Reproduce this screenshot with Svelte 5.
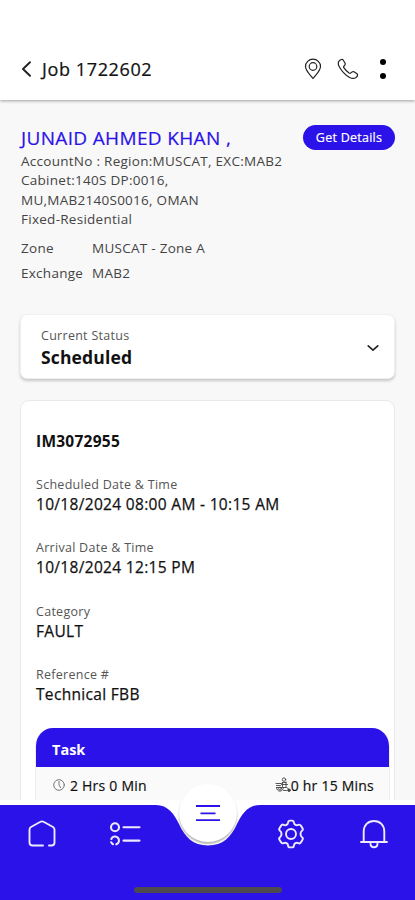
<script>
  const fields = [
    { label: 'Scheduled Date & Time', value: '10/18/2024 08:00 AM - 10:15 AM' },
    { label: 'Arrival Date & Time', value: '10/18/2024 12:15 PM' },
    { label: 'Category', value: 'FAULT' },
    { label: 'Reference #', value: 'Technical FBB' }
  ];
</script>

<div class="screen">
  <header>
    <svg class="back" width="12" height="18" viewBox="0 0 12 18"><path d="M10 2.200 3 9 10 15.800" /></svg>
    <h1>Job 1722602</h1>
    <svg class="pin" width="18" height="22" viewBox="0 0 18 22">
      <path d="M9 20.5C6.500 17 1.500 12.700 1.500 8.400a7.500 7.200 0 0 1 15 0C16.500 12.700 11.500 17 9 20.500Z" />
      <circle cx="9" cy="8.500" r="3.800" />
    </svg>
    <svg class="phone" width="22" height="22" viewBox="0 0 22 22">
      <path d="M2.200 2.900C3.500 1.300 5.400 1 6.200 2l1.900 3.200c.6 1.200-.1 2-1.200 3-.5.500-.4 1 .1 1.700 1.300 2 2.900 3.700 5.100 5.100.7.400 1.200.4 1.700-.1 1-1.100 2-1.800 3.200-1.100l3 2c1 .9.600 2.400-.9 3.600-1.800 1.500-4.100 1.400-6.900-.2C8 16.700 4.700 13.100 2.400 9 1 6.500.9 4.400 2.200 2.900Z" />
    </svg>
    <div class="dots"><i></i><i></i></div>
  </header>

  <main>
    <section class="customer">
      <div class="who">
        <h2>JUNAID AHMED KHAN ,</h2>
        <p>AccountNo : Region:MUSCAT, EXC:MAB2<br />Cabinet:140S DP:0016,<br />MU,MAB2140S0016, OMAN<br />Fixed-Residential</p>
      </div>
      <button>Get Details</button>
    </section>
    <dl>
      <dt>Zone</dt><dd>MUSCAT - Zone A</dd>
      <dt>Exchange</dt><dd>MAB2</dd>
    </dl>

    <section class="status">
      <div>
        <span class="label">Current Status</span>
        <strong>Scheduled</strong>
      </div>
      <svg width="12" height="8" viewBox="0 0 12 8"><path d="M1.200 1.800 6 6.200 10.800 1.800" /></svg>
    </section>

    <section class="job">
      <h3>IM3072955</h3>
      {#each fields as f}
        <div class="field">
          <span class="label">{f.label}</span>
          <span class="value">{f.value}</span>
        </div>
      {/each}
      <div class="task">
        <div class="task-head">Task</div>
        <div class="task-row">
          <svg class="clock" width="12" height="12" viewBox="0 0 12 12"><circle cx="6" cy="6" r="5.300" /><path d="M6 2.500V6l1.700 2.700" /></svg>
          <span class="dur">2 Hrs 0 Min</span>
          <svg class="travel" width="17" height="16" viewBox="0 0 17 16">
            <circle cx="9" cy="2.600" r="1.700" />
            <path d="M1 6.500h5.500M1.500 8.500h4M7.500 5.500v4M11 5v5M7.500 5.500h3.500M6.500 7.500h6M1.500 10.500h10c1 0 1.500 1 2 2" />
            <path d="M1.500 10.500C1.800 15.500 8 15.500 8.500 10.500" /><circle cx="5" cy="11.600" r="1.400" />
            <path d="M8.500 13.500h3" /><circle cx="14" cy="13.200" r="1.300" fill="#444" />
          </svg>
          <span class="eta">0 hr 15 Mins</span>
        </div>
      </div>
    </section>
  </main>

  <nav>
    <svg class="bar" width="415" height="95" viewBox="0 0 415 95">
      <path d="M0 0H156C168 0 174 9 179 19C185 32 193 40.500 208 40.500C223 40.500 231 32 237 19C242 9 248 0 260 0H415V95H0Z" />
    </svg>
    <div class="tabs">
      <svg class="home" width="30" height="30" viewBox="0 0 30 30"><path d="M16 26.500H5.500Q2.500 26.500 2.500 23.500V10.500Q2.500 9 4 8L13 3Q15 1.800 17 3L26 8Q27.500 9 27.500 10.500V23.500Q27.500 26.500 24.500 26.500H22" /></svg>
      <svg class="list" width="32" height="26" viewBox="0 0 32 26"><circle cx="6" cy="6.200" r="4" /><path d="M14.500 6.200H30.500M14.500 19.600H30.500M2.300 18A4 4 0 1 1 7.300 23.300M2.200 21.300Q3 22.800 4 23.200" /></svg>
      <svg class="gear" width="30" height="30" viewBox="0 0 24 24">
        <circle cx="12" cy="12" r="4" />
        <path d="M9.700 2.700Q9.800 1.300 11.200 1.300H12.800Q14.200 1.300 14.300 2.700C14.500 4.600 16.200 5.500 17.900 4.700Q19.200 4.100 19.900 5.300L21.200 7.400Q21.900 8.600 20.800 9.400C19.200 10.500 19.200 13.500 20.800 14.600Q21.900 15.400 21.200 16.600L19.900 18.700Q19.200 19.900 17.900 19.300C16.200 18.500 14.500 19.400 14.300 21.300Q14.200 22.700 12.800 22.700H11.200Q9.800 22.700 9.700 21.300C9.500 19.400 7.800 18.500 6.100 19.300Q4.800 19.900 4.100 18.700L2.800 16.600Q2.100 15.400 3.200 14.600C4.800 13.500 4.800 10.500 3.200 9.400Q2.100 8.600 2.800 7.400L4.100 5.300Q4.800 4.100 6.100 4.700C7.800 5.500 9.500 4.600 9.700 2.700Z" />
      </svg>
      <svg class="bell" width="28" height="30" viewBox="0 0 28 30"><path d="M1 23H27M3.700 23V12.500C3.700 6 8 2 14 2S24.300 6 24.300 12.500V23M10.500 24.500C10.500 29.500 17.500 29.500 17.500 24.500" /></svg>
    </div>
    <div class="menu">
      <svg width="26" height="18" viewBox="0 0 26 18"><path d="M1 2H25M5.500 9.300H20.500M1 16.200H25" /></svg>
    </div>
    <div class="handle"></div>
  </nav>
</div>

<style>
  :global(body) { margin: 0; }
  .screen, .screen * { box-sizing: border-box; }
  .screen {
    width: 415px; height: 900px; overflow: hidden;
    display: flex; flex-direction: column;
    background: #f8f8f8; color: #111;
    font-family: "Open Sans", "Noto Sans", sans-serif;
    white-space: nowrap;
  }
  h1, h2, h3, p, dl, dd { margin: 0; font-weight: 400; }
  svg { display: block; flex: none; fill: none; stroke: #222; stroke-linecap: round; stroke-linejoin: round; }
  header {
    height: 100px; flex: none; background: #fff; padding: 38px 29px 0 20px;
    display: flex; align-items: center; position: relative;
    box-shadow: 0 1px 3px rgba(0, 0, 0, .36);
  }
  .back { stroke-width: 1.900; margin-right: 10px; }
  h1 { font-size: 18px; line-height: 24px; flex: 1; letter-spacing: .62px; -webkit-text-stroke: .2px; margin-top: -1px; }
  .pin { stroke-width: 1.200; margin-right: 15px; }
  .phone { stroke-width: 1.200; margin-right: 21px; }
  .dots { display: flex; flex-direction: column; gap: 8px; }
  .dots i { width: 6px; height: 6px; border-radius: 50%; background: #000; }

  main { flex: 1; min-height: 0; overflow: hidden; padding: 25px 20px 0; }
  .customer { display: flex; justify-content: space-between; align-items: flex-start; }
  .who { padding-left: 1px; }
  h2 { color: #2b12e8; font-size: 19px; line-height: 26px; letter-spacing: .35px; -webkit-text-stroke: .2px; }
  p { font-size: 13.500px; line-height: 19.300px; letter-spacing: .27px; color: #444; margin-top: 1px; }
  button {
    width: 92px; height: 25px; border: 0; border-radius: 13px; background: #2b12e8; color: #fff;
    font: 400 12.500px/25px "Open Sans", "Noto Sans", sans-serif; padding: 0; letter-spacing: .25px; -webkit-text-stroke: .2px;
  }
  dl { display: grid; grid-template-columns: 71px 1fr; font-size: 13.500px; line-height: 24.500px; letter-spacing: .27px; color: #444; margin-top: 7px; padding-left: 1px; }

  .status {
    margin-top: 29px; height: 65px; border-radius: 7px; background: #fff; padding: 11px 15px 0 20px;
    display: flex; justify-content: space-between; border: 1px solid #f0f0f0;
    box-shadow: 0 2px 3px rgba(0, 0, 0, .2);
  }
  .status svg { stroke-width: 1.600; margin-top: 18px; }
  strong { display: block; font-size: 17.500px; line-height: 23px; font-weight: 700; letter-spacing: .15px; }
  .label { display: block; color: #555; font-size: 12.500px; line-height: 20px; letter-spacing: .28px; }
  .job {
    margin-top: 21px; height: 500px; background: #fff; border: 1px solid #e9e9e9; border-radius: 9px;
    padding: 29px 5px 0 15px;
  }
  h3 { font-size: 15.500px; line-height: 22px; font-weight: 700; letter-spacing: .25px; margin-bottom: 23px; }
  .field { height: 63.200px; }
  .value { display: block; margin-top: -2px; font-size: 15.500px; line-height: 22px; letter-spacing: .32px; -webkit-text-stroke: .25px; }
  .task { margin: 0 -1px 0 -1px; border: 1px solid #eee; border-top: 0; border-radius: 18px 18px 0 0; overflow: hidden; background: #fafafa; height: 120px; }
  .task-head { height: 39px; margin: 0 -1px; background: #2b12e8; color: #fff; font-size: 14.500px; line-height: 43px; font-weight: 700; padding-left: 17px; }
  .task-row { height: 37px; padding: 0 15px 0 17px; display: flex; align-items: center; font-size: 14px; letter-spacing: .22px; -webkit-text-stroke: .2px; }
  .clock { stroke: #777; stroke-width: 1; margin-right: 5px; }
  .dur { flex: 1; }
  .travel { stroke: #444; stroke-width: .900; margin-right: -1px; }

  nav { height: 100px; flex: none; position: relative; background: #fff; }
  .bar { position: absolute; left: 0; bottom: 0; fill: #2b12e8; stroke: none; }
  .tabs { position: relative; padding: 19px 28px 0 27px; display: flex; align-items: flex-start; }
  .tabs svg { stroke: #eee9ff; stroke-width: 1.900; }
  .home { margin-right: 52px; }
  .list { margin: 2px 135px 0 0; }
  .tabs .list { stroke-width: 2.100; }
  .tabs .gear { stroke-width: 1.550; margin-right: 54px; }
  .menu {
    position: absolute; left: 179px; top: -16px; width: 58px; height: 58px; border-radius: 50%;
    background: #fff; box-shadow: 0 2px 2px rgba(90, 90, 80, .45);
    display: flex; align-items: center; justify-content: center;
  }
  .menu svg { stroke: #2b12e8; stroke-width: 1.800; stroke-linecap: butt; }
  .handle { position: absolute; left: 134px; bottom: 7px; width: 148px; height: 6px; border-radius: 3px; background: #4c4a50; }
</style>
